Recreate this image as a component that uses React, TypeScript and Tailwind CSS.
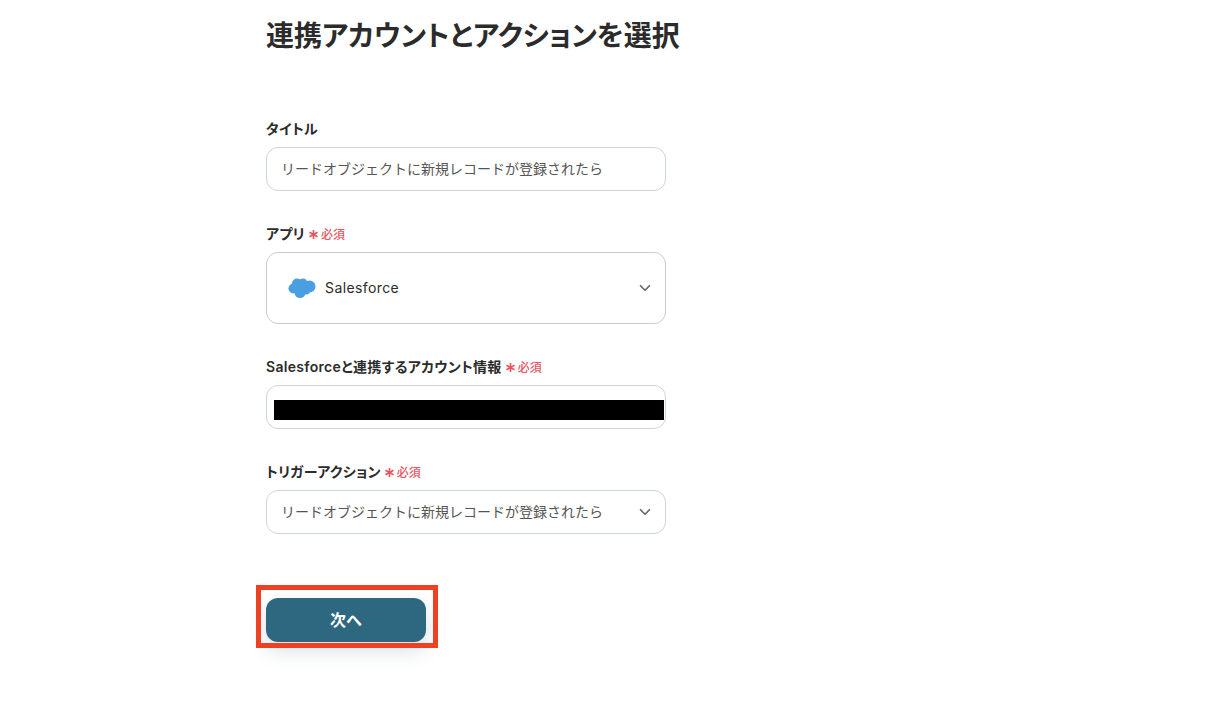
import { ChevronDown } from 'lucide-react';

const font = "[font-family:Inter,'Noto_Sans_CJK_JP',sans-serif]";

function Required() {
  return (
    <span className="ml-[3px] mt-px inline-flex items-center text-xs font-medium tracking-normal text-[#e8555f]">
      <svg viewBox="0 0 12 12" className="mr-[2px] h-[11px] w-[11px]" fill="none" stroke="#e8555f" strokeWidth="1.8">
        <path d="M6 1v10M1.6 3.5l8.8 5M10.4 3.5l-8.8 5" />
      </svg>
      必須
    </span>
  );
}

function Label({ text, required }: { text: string; required?: boolean }) {
  return (
    <div className="flex h-5 items-center text-sm font-semibold tracking-[0.3px] text-[#2b2b2b] [font-feature-settings:'palt']">
      {text}
      {required && <Required />}
    </div>
  );
}

function SalesforceLogo() {
  return (
    <svg viewBox="0 0 28 22" className="h-[22px] w-7" fill="#4a9fe0">
      <circle cx="9" cy="6.5" r="5" />
      <circle cx="15" cy="6" r="4.5" />
      <circle cx="21.5" cy="9.5" r="6" />
      <circle cx="5.5" cy="11.5" r="5" />
      <circle cx="12" cy="15.5" r="5.5" />
      <circle cx="18" cy="13" r="4.5" />
      <rect x="6" y="6" width="16" height="9" />
    </svg>
  );
}

export default function App() {
  return (
    <div className={`h-[704px] w-full overflow-hidden bg-white pl-[266px] ${font}`}>
      <h1 className="flex h-[72px] items-center text-[28px] font-bold text-[#2b2b2b] [font-feature-settings:'palt']">
        連携アカウントとアクションを選択
      </h1>

      <div className="mt-[47px] flex w-[400px] flex-col">
        {/* タイトル */}
        <Label text="タイトル" />
        <div className="mt-[8px] flex h-[44px] items-center rounded-xl border border-[#cfd3dc] pl-[14px] text-sm text-[#555555]">
          リードオブジェクトに新規レコードが登録されたら
        </div>

        {/* アプリ */}
        <div className="mt-[33px]">
          <Label text="アプリ" required />
        </div>
        <div className="mt-[8px] flex h-[72px] items-center rounded-xl border border-[#c9ccd3] pl-[21px] pr-[11px]">
          <SalesforceLogo />
          <span className="ml-[9px] text-sm tracking-[0.4px] text-[#2b2b2b]">Salesforce</span>
          <ChevronDown className="ml-auto h-[18px] w-[18px] text-[#666666]" strokeWidth={2.25} />
        </div>

        {/* アカウント情報 */}
        <div className="mt-[33px]">
          <Label text="Salesforceと連携するアカウント情報" required />
        </div>
        <div className="mt-[8px] flex h-[44px] items-center rounded-xl border border-[#cfd3dc] pl-[7px] pr-px pt-[6px]">
          <div className="h-5 w-full bg-black" />
        </div>

        {/* トリガーアクション */}
        <div className="mt-[33px]">
          <Label text="トリガーアクション" required />
        </div>
        <div className="mt-[8px] flex h-[44px] items-center rounded-xl border border-[#cfd3dc] pl-[14px] pr-[11px] text-sm text-[#555555]">
          リードオブジェクトに新規レコードが登録されたら
          <ChevronDown className="ml-auto h-[18px] w-[18px] text-[#666666]" strokeWidth={2.25} />
        </div>
      </div>

      {/* 次へ */}
      <div className="relative mt-[64px] w-[160px]">
        <button className="flex h-[44px] w-[160px] items-center justify-center rounded-xl bg-[#2d6880] text-base font-bold text-white shadow-[0_8px_20px_rgba(45,70,90,0.18)]">
          次へ
        </button>
        <div className="absolute -bottom-[6px] -left-[10px] -right-[12px] -top-[13px] border-[5px] border-[#ee4123]" />
      </div>
    </div>
  );
}
